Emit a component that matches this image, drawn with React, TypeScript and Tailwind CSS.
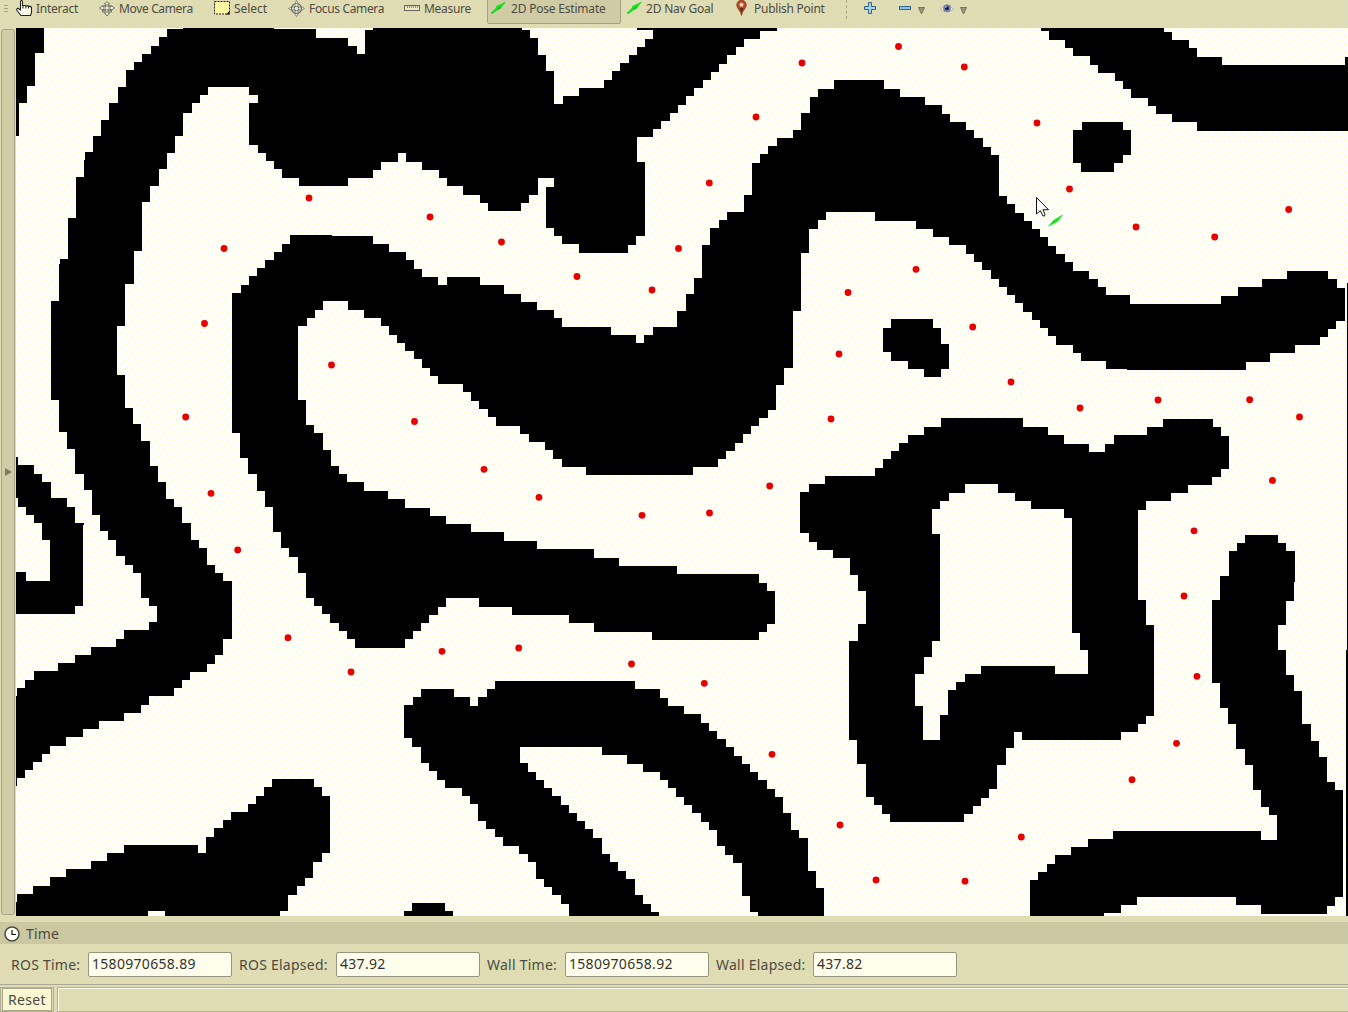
import React from "react";

/* Occupancy-grid walls, traced along the cell borders in viewport pixels. */
const WALLS = [
  "M16 28H44V53H35V86H27V103H19V136H16Z",
  "M167 29V37H159V46H151V54H142V62H134V70H126V87H118V103H109V120H101V136H93V152H85V160H84V177H76V218H68V259H60V264H59V301H51V400H59V432H67V449H75V474H84V490H92V515H100V531H108V540H116V556H125V565H133V573H141V598H149V606H157V622H149V630H124V639H116V647H91V655H75V663H58V671H34V680H25V688H17V696H16V786H17V778H25V770H33V762H42V754H50V746H66V737H83V729H99V721H124V713H141V705H149V696H174V688H182V680H190V672H207V664H215V655H223V639H232V581H223V573H215V565H207V548H199V540H191V523H182V507H174V499H166V482H158V466H150V441H141V424H133V408H125V375H117V326H125V284H134V251H142V202H150V186H159V169H167V153H175V136H183V113H192V103H200V95H208V87H249V95H258V103H249V145H258V153H266V161H274V169H282V178H299V186H348V178H373V170H381V162H398V153H406V162H422V170H439V178H447V186H463V195H480V203H488V211H521V203H529V195H538V178H554V187H546V228H554V236H562V244H579V253H628V245H636V236H645V162H637V137H653V129H661V121H670V113H678V105H686V96H694V88H703V80H711V72H719V64H727V55H736V47H744V39H760V31H777V28H637V30H653V39H645V47H637V55H629V63H620V71H612V80H604V88H579V96H563V104H554V71H546V55H538V38H530V30H522V28H373V30H365V54H357V46H348V38H316V29H274V28H183V29Z",
  "M1041 28V31H1049V40H1065V48H1073V56H1090V65H1098V73H1115V81H1123V89H1131V98H1148V106H1156V114H1172V122H1197V131H1348V57H1345V65H1222V57H1197V48H1189V40H1172V32H1164V28Z",
  "M1082 122H1123V130H1131V155H1123V163H1114V172H1081V163H1073V130H1082Z",
  "M290 235H332V236H373V244H389V252H406V260H414V269H422V277H438V285H447V277H480V285H504V294H521V302H537V310H554V318H562V327H611V335H636V343H644V335H653V327H677V311H686V294H694V278H702V245H710V228H719V220H727V212H744V195H752V163H760V154H768V146H777V138H793V130H801V113H810V97H818V89H834V80H884V89H900V97H925V105H942V114H950V122H966V130H974V138H983V147H991V155H999V196H1007V204H1015V213H1024V221H1032V229H1040V237H1048V246H1056V254H1065V262H1073V271H1089V279H1098V287H1106V295H1130V304H1221V296H1238V287H1262V279H1287V271H1328V279H1337V288H1345V321H1336V329H1328V337H1320V345H1295V353H1270V362H1246V370H1127V369H1106V361H1081V353H1073V345H1056V336H1048V328H1040V320H1032V312H1023V303H1015V295H1007V287H999V279H991V270H982V262H974V254H966V245H949V237H933V229H916V221H875V212H826V220H818V229H809V253H801V311H793V368H784V385H776V410H768V418H759V426H751V434H743V443H735V451H726V459H718V467H693V475H586V467H562V459H553V450H545V442H529V434H520V426H496V417H488V409H479V401H471V392H463V384H438V376H430V368H422V359H414V351H405V343H397V335H389V326H381V318H364V310H348V301H323V310H315V318H307V326H298V400H306V425H314V433H323V450H331V466H339V474H347V482H364V491H388V499H405V508H430V516H446V524H471V532H504V541H537V549H594V558H619V566H677V574H759V583H767V591H775V624H767V632H759V640H652V632H594V623H569V615H512V607H479V598H446V607H438V615H429V623H421V631H413V639H405V648H355V639H347V631H339V623H330V614H322V606H314V598H306V573H298V557H289V548H281V532H273V507H265V491H257V474H248V458H240V433H232V293H241V285H249V276H257V268H265V260H274V252H282V244H290Z",
  "M16 457H18V465H34V474H42V482H51V498H67V507H75V523H84V525H83V606H75V614H16V572H26V581H50V540H42V523H34V515H26V507H18V498H16Z",
  "M891 319H933V328H941V344H949V369H941V377H924V369H908V361H891V352H883V328H891Z",
  "M941 418H1023V427H1048V435H1064V444H1089V452H1105V444H1114V435H1147V427H1163V419H1213V427H1221V436H1229V469H1221V477H1212V485H1188V493H1171V501H1146V510H1138V600H1146V625H1154V716H1146V724H1138V732H1121V740H1022V732H1014V748H1006V765H997V789H989V798H981V806H973V814H964V822H890V814H882V805H874V797H866V764H857V740H849V641H858V624H866V591H858V575H850V558H833V550H817V542H809V533H800V492H809V484H825V476H875V468H883V459H891V451H899V443H908V435H924V427H941ZM965 484H998V493H1015V501H1031V509H1064V518H1072V633H1080V650H1088V674H1055V666H981V674H965V682H956V690H948V715H940V740H923V706H915V674H924V657H932V641H940V534H932V509H940V501H949V493H965Z",
  "M1245 535H1278V543H1286V551H1295V582H1294V601H1286V625H1278V650H1286V675H1294V691H1302V724H1311V741H1319V757H1327V782H1335V790H1343V897H1335V906H1327V914H1261V905H1236V897H1137V905H1121V913H1104V916H1030V880H1038V872H1047V864H1055V855H1071V847H1088V839H1113V831H1261V840H1277V815H1269V807H1261V790H1253V765H1245V749H1236V724H1228V708H1220V683H1212V600H1220V576H1229V551H1237V543H1245Z",
  "M421 689H454V697H470V706H478V697H487V689H495V681H635V689H660V698H668V706H684V714H701V723H709V731H717V739H726V747H734V756H742V764H750V772H758V780H767V789H775V797H783V813H791V830H799V838H808V871H816V888H824V916H758V912H750V896H742V863H733V855H725V846H717V830H709V822H701V813H692V805H684V797H676V788H668V780H660V772H643V764H627V755H602V747H520V763H528V772H536V780H544V788H552V796H561V805H569V813H577V821H585V829H593V838H602V854H610V862H618V871H626V879H635V895H643V904H651V912H659V916H569V904H561V895H552V887H544V879H536V862H528V854H519V846H503V837H495V829H486V821H478V804H470V796H462V788H445V780H437V771H429V763H421V747H412V738H404V705H413V697H421Z",
  "M272 779H314V787H322V796H330V853H322V862H313V878H305V886H297V895H288V911H280V916H165V911H148V916H16V902H17V894H33V886H50V877H66V869H91V861H107V853H124V845H198V853H206V837H214V828H223V820H231V812H248V804H256V796H264V787H272Z",
  "M412 903H445V911H453V916H404V911H412Z",
  "M1347 283H1348V916H1346V650H1347Z",
];

const WAYPOINTS: [number, number][] = [
  [309, 198], [430, 217], [224, 248.5], [204.5, 323.5], [501.5, 242], [577, 276.5], [652, 290],
  [678.5, 248.5], [709.3, 183], [756, 117], [802, 63], [898.5, 46.5], [848, 292.5], [964.3, 67],
  [1037, 123], [1069.5, 189], [1136, 227], [1214.7, 237], [1288.7, 209.5], [916, 269.3], [972.7, 327],
  [331.5, 365], [185.7, 417], [414.5, 421.5], [211, 493.3], [237.7, 550], [288, 637.7], [442, 651.3],
  [351, 672], [839, 354], [831, 419], [484, 469.3], [539, 497.3], [642, 515.3], [709.5, 513],
  [769.7, 486], [518.7, 648], [631.5, 664], [1011, 382], [1080, 408], [1158, 400], [1249.7, 399.7],
  [1299.5, 417], [1272.5, 480.5], [1194, 530.8], [1184, 596], [1197, 676.3], [704.3, 683.3],
  [772, 754.3], [840, 825], [876, 880], [1176.5, 743.3], [1132, 779.7], [1021.3, 837], [965, 881.2],
];

function HandIcon() {
  return (
    <svg width="17" height="17" viewBox="0 0 17 17" className="shrink-0">
      <path d="M4.500 10V2Q4.500.5 5.500.5T6.500 2V5.200L9 5.500L10 6L12 5.700L12.500 6.600Q15 6 15.500 7.500V12.500L14.500 15.500H5L1 10.500Q.2 8.600 1.800 8.200L4.500 10Z" fill="#fcfcec" stroke="#222" strokeWidth="1.100" />
      <path d="M7 5V8.500M9.800 6V8.500M12.500 6.500V8.500" stroke="#222" />
    </svg>
  );
}

function MoveIcon() {
  return (
    <svg width="16" height="16" viewBox="0 0 16 16" className="shrink-0" fill="#efefdd" stroke="#62625c" strokeWidth="0.900">
      <ellipse cx="8" cy="7" rx="5" ry="2.500" fill="none" />
      <path d="M8 .5L10.500 3H9V6H12V4.500L15.500 7L12 9.500V8H9V12H10.500L8 15L5.500 12H7V8H4V9.500L.5 7L4 4.500V6H7V3H5.500Z" />
      <path d="M4 8.500L3.500 11L6 11M12 8.500L12.500 11L10 11" fill="none" />
    </svg>
  );
}

function SelectIcon() {
  return (
    <svg width="16" height="14" viewBox="0 0 16 14" className="-mt-px shrink-0">
      <rect x=".5" y=".5" width="15" height="12.500" fill="#fbf6a0" stroke="#222" strokeDasharray="2 1" />
      <path d="M15.500 10V13.500H12Z" fill="#111" />
    </svg>
  );
}

function FocusIcon() {
  return (
    <svg width="17" height="17" viewBox="0 0 17 17" className="shrink-0" fill="none" stroke="#74746e">
      <path d="M8.500 .5L10 3V7H14L16.500 8.500L14 10H10V14L8.500 16.500L7 14V10H3L.5 8.500L3 7H7V3Z" fill="#ebebdc" strokeWidth=".8" />
      <circle cx="8.500" cy="8.500" r="5" strokeWidth="1.200" />
      <circle cx="8.500" cy="8.500" r="2.200" />
    </svg>
  );
}

function RulerIcon() {
  return (
    <svg width="16" height="8" viewBox="0 0 16 8" className="-mt-px shrink-0">
      <rect x=".5" y="1.500" width="15" height="5" fill="#ece9c4" stroke="#67675a" />
      <path d="M3.500 2V4M5.500 2V4M7.500 2V4M9.500 2V4M11.500 2V4M13.500 2V4" stroke="#77776a" strokeWidth=".8" />
    </svg>
  );
}

function ArrowIcon() {
  return (
    <svg width="15" height="12" viewBox="0 0 15 12" className="-mt-px shrink-0">
      <path d="M0 11L5.500 5.500L5 4.500L14.500 0L9.500 6.500L8.500 6.500L1 12Z" fill="#12e31c" stroke="#12e31c" strokeWidth=".5" />
      <path d="M5.500 8.500L9 4.500L9.500 6.500Z" fill="#3c9a30" />
    </svg>
  );
}

function PinIcon() {
  return (
    <svg width="11" height="16" viewBox="0 0 11 16" className="-mt-0.5 shrink-0">
      <path d="M5.500 15.500C5 11 .7 8.500.7 5A4.800 5 0 0 1 10.300 5C10.300 8.500 6 11 5.500 15.500Z" fill="#bd481f" stroke="#85351c" strokeWidth=".6" />
      <path d="M5.500 15C5.200 11.500 3.800 9 3.500 8H7.500C7 9.500 5.800 11.500 5.500 15Z" fill="#5b3020" />
      <circle cx="5.500" cy="4.700" r="2" fill="#f5dccb" />
    </svg>
  );
}

function Caret() {
  return (
    <svg width="7" height="8" viewBox="0 0 7 8" className="shrink-0">
      <path d="M.5 .5H6.500L3.500 7Z" fill="#96967c" stroke="#77775f" />
    </svg>
  );
}

function Tool({ icon, label, tracking, className }: { icon: React.ReactNode; label: string; tracking: string; className: string }) {
  return (
    <div className={`flex h-[17px] shrink-0 items-center ${className}`}>
      {icon}
      <span className={`whitespace-nowrap text-[12px] leading-[17px] ${tracking}`}>{label}</span>
    </div>
  );
}

function Toolbar() {
  return (
    <div className="relative h-7 w-full overflow-hidden">
      <div className="flex h-[17px] items-center">
        <div className="ml-1 flex w-3 shrink-0 flex-col gap-[2px]">
          <i className="h-px w-1 bg-[#a5a48b]" />
          <i className="h-px w-1 bg-[#a5a48b]" />
          <i className="h-px w-1 bg-[#a5a48b]" />
        </div>
        <Tool icon={<HandIcon />} label="Interact" tracking="tracking-[-0.25px]" className="w-[83px] gap-[3px]" />
        <Tool icon={<MoveIcon />} label="Move Camera" tracking="tracking-[-0.35px]" className="w-[115px] gap-1" />
        <Tool icon={<SelectIcon />} label="Select" tracking="tracking-[-0.05px]" className="w-[74px] gap-1" />
        <Tool icon={<FocusIcon />} label="Focus Camera" tracking="tracking-[-0.350px]" className="w-[116px] gap-1" />
        <Tool icon={<RulerIcon />} label="Measure" tracking="tracking-[-0.3px]" className="w-[83px] gap-1" />
        <div className="-mt-2 h-[32px] w-[134px] shrink-0 self-start rounded-[2px] border border-[#a2a184] bg-[conic-gradient(#cfcca5_25%,#c7c7d8_0_50%,#cfcca5_0_75%,#c7c7d8_0)] bg-[length:2px_2px] pl-[3px] pt-[7px]">
          <Tool icon={<ArrowIcon />} label="2D Pose Estimate" tracking="tracking-[-0.2px]" className="gap-[5px]" />
        </div>
        <Tool icon={<ArrowIcon />} label="2D Nav Goal" tracking="tracking-[-0.2px]" className="ml-[6px] w-[109px] gap-1" />
        <Tool icon={<PinIcon />} label="Publish Point" tracking="tracking-[-0.25px]" className="w-[110px] gap-[7px]" />
        <div className="h-[19px] w-[18px] shrink-0 self-start border-l border-dashed border-[#aaa98c]" />
        <svg width="12" height="12" viewBox="0 0 12 12" className="-mt-px shrink-0">
          <path d="M4.500 .5H7.500V4.500H11.500V7.500H7.500V11.500H4.500V7.500H.5V4.500H4.500Z" fill="#a4cfe6" stroke="#31658f" />
        </svg>
        <svg width="12" height="4" viewBox="0 0 12 4" className="-mt-px ml-[23px] shrink-0">
          <rect x=".5" y=".5" width="11" height="3" fill="#8fc3e6" stroke="#31658f" />
        </svg>
        <div className="ml-[7px] mt-1"><Caret /></div>
        <svg width="14" height="11" viewBox="0 0 14 11" className="ml-[15px] shrink-0">
          <path d="M.5 6Q7-2 13.500 6Q7 12 .5 6Z" fill="#ededdf" stroke="#a3a293" strokeWidth=".8" />
          <circle cx="7" cy="5.200" r="3.800" fill="#747cb2" />
          <circle cx="7" cy="5.200" r="1.900" fill="#181b42" />
          <circle cx="6" cy="4" r=".7" fill="#fff" />
        </svg>
        <div className="ml-[6px] mt-1"><Caret /></div>
      </div>
    </div>
  );
}

function MapView() {
  return (
    <div className="h-[888px] w-[1332px] shrink-0 bg-[#fdfdff] bg-[image:conic-gradient(from_270deg_at_1px_1px,#ffffaa_25%,transparent_0),conic-gradient(from_270deg_at_1px_1px,#ffffaa_25%,transparent_0)] bg-[length:8px_8px] bg-[position:0_0,4px_4px]">
      <svg width="1332" height="888" viewBox="16 28 1332 888" className="block">
        <g fill="#000" fillRule="evenodd" shapeRendering="crispEdges">
          {WALLS.map((d) => <path key={d.slice(0, 18)} d={d} />)}
        </g>
        <g fill="#e60000">
          {WAYPOINTS.map(([x, y]) => <circle key={`${x}-${y}`} cx={x} cy={y} r="3.400" />)}
        </g>
        <path d="M1048.500 226L1054 220L1062.500 215L1058 221L1055 223Z" fill="#19e51d" stroke="#19e51d" strokeWidth=".6" />
        <path d="M1036.500 197.500V214L1040.300 210.700L1043 216Q1045 216.500 1045 214.500L1043 209.700H1048.500Z" fill="#fff" stroke="#111" />
      </svg>
    </div>
  );
}

function TimeField({ label, value, className }: { label: string; value: string; className: string }) {
  return (
    <div className="flex items-center">
      <span className={`whitespace-nowrap text-[14px] tracking-[0.25px] ${className}`}>{label}</span>
      <div className="h-[25px] w-[144px] rounded-[2px] border border-[#96957f] bg-[#fffeec] pl-[3px] text-[14px] leading-[22px] tracking-[0.3px] text-[#33332d]">{value}</div>
    </div>
  );
}

export default function App() {
  return (
    <div className="flex h-[1012px] w-[1348px] flex-col overflow-hidden bg-[conic-gradient(#d6d6e2_25%,#e1deb5_0_50%,#d6d6e2_0_75%,#e1deb5_0)] bg-[length:2px_2px] font-['Noto_Sans','Open_Sans',sans-serif] text-[#4c4b42]">
      <Toolbar />
      <div className="flex h-[888px]">
        <div className="flex w-4 shrink-0 pl-px pt-px">
          <div className="flex h-[886px] w-[14px] items-center rounded-[3px] border border-[#a7a588] bg-[conic-gradient(#c9c9d8_25%,#cfcca5_0_50%,#c9c9d8_0_75%,#cfcca5_0)] bg-[length:2px_2px] pl-[3px]">
            <svg width="7" height="8" viewBox="0 0 7 8"><path d="M0 0L7 4L0 8Z" fill="#7d7c65" /></svg>
          </div>
        </div>
        <MapView />
      </div>
      <div className="mt-[6px] flex h-[22px] items-center gap-[6px] bg-[conic-gradient(#c4c4d2_25%,#cac7a0_0_50%,#c4c4d2_0_75%,#cac7a0_0)] bg-[length:2px_2px] pl-1">
        <svg width="16" height="16" viewBox="0 0 16 16" className="mt-px">
          <circle cx="8" cy="8" r="7" fill="#fffff3" stroke="#4d4d46" strokeWidth="1.600" />
          <path d="M8 4V8.500H12" fill="none" stroke="#111" strokeWidth="1.200" />
        </svg>
        <span className="mt-px text-[14px] leading-5 tracking-[0.2px]">Time</span>
      </div>
      <div className="flex h-10 items-center pl-[11px]">
        <TimeField label="ROS Time:" value="1580970658.89" className="w-[77px]" />
        <TimeField label="ROS Elapsed:" value="437.92" className="ml-[7px] w-[97px]" />
        <TimeField label="Wall Time:" value="1580970658.92" className="ml-[7px] w-[78px]" />
        <TimeField label="Wall Elapsed:" value="437.82" className="ml-[7px] w-[97px]" />
      </div>
      <div className="flex h-7 border-t border-[#aaa999] pt-[2px]">
        <div className="flex h-[25px] w-[54px] items-start justify-center border border-[#b1af94]">
          <button className="h-[23px] w-[50px] border border-[#aaa88d] bg-[#faf7d2] text-[14px] leading-5 tracking-[0.3px]">Reset</button>
        </div>
        <div className="ml-[3px] h-[25px] flex-1 border border-r-0 border-[#b1af94] shadow-[inset_1px_1px_0_#fffef0]" />
      </div>
    </div>
  );
}
